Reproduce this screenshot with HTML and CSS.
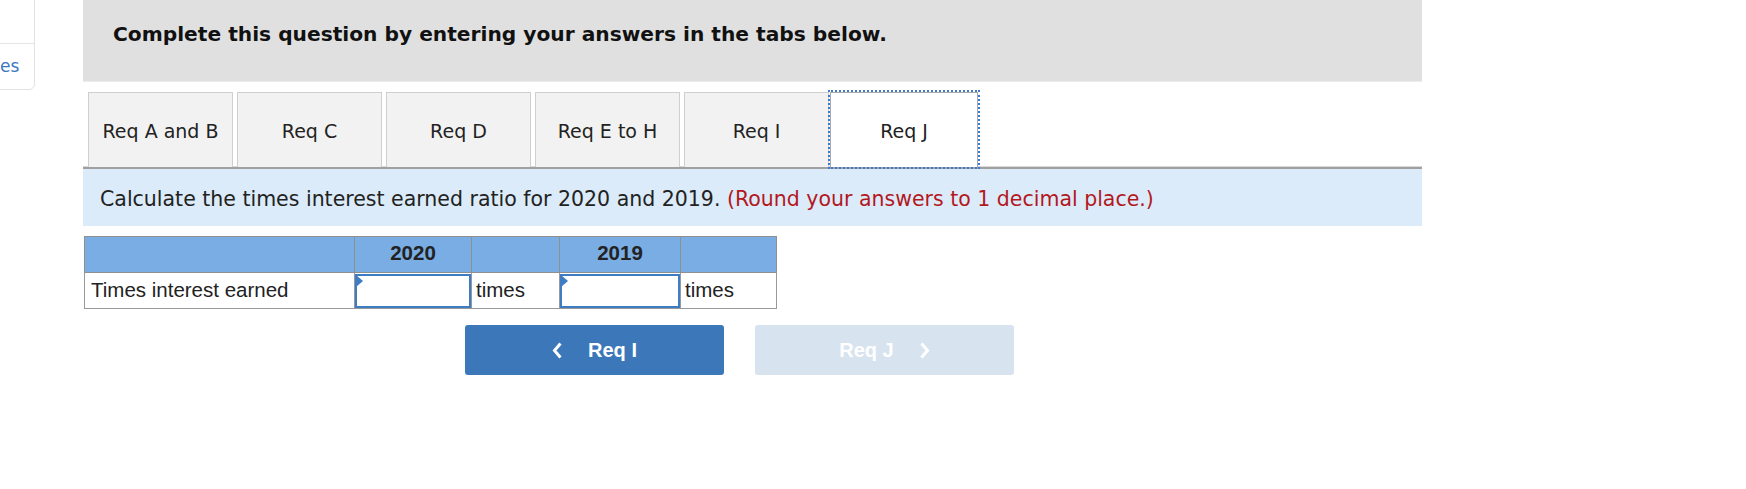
FILE: index.html
```html
<!DOCTYPE html>
<html>
<head>
<meta charset="utf-8">
<link rel="stylesheet" href="styles.css">
</head>
<body>
<div class="page">
  <div class="side-card">
    <div class="side-top"></div>
    <div class="side-bottom"><span class="side-link">es</span></div>
  </div>
  <div class="main">
    <div class="instr">Complete this question by entering your answers in the tabs below.</div>
    <div class="tabs">
      <div class="tab">Req A and B</div>
      <div class="tab">Req C</div>
      <div class="tab">Req D</div>
      <div class="tab">Req E to H</div>
      <div class="tab">Req I</div>
      <div class="tab active">Req J</div>
    </div>
    <div class="prompt">Calculate the times interest earned ratio for 2020 and 2019. <span class="note">(Round your answers to 1 decimal place.)</span></div>
    <table class="grid">
      <tr class="head">
        <th class="c1"></th>
        <th class="c2">2020</th>
        <th class="c3"></th>
        <th class="c4">2019</th>
        <th class="c5"></th>
      </tr>
      <tr>
        <td class="label">Times interest earned</td>
        <td class="inp"><div class="box"><span class="flag"></span></div></td>
        <td class="unit">times</td>
        <td class="inp"><div class="box"><span class="flag"></span></div></td>
        <td class="unit">times</td>
      </tr>
    </table>
    <div class="nav">
      <div class="btn prev"><svg class="chev" width="11" height="17" viewBox="0 0 11 17"><polyline points="8.5,1.5 2.5,8.5 8.5,15.5" fill="none" stroke="#fff" stroke-width="3"/></svg><span>Req I</span></div>
      <div class="btn next"><span>Req J</span><svg class="chev" width="11" height="17" viewBox="0 0 11 17"><polyline points="2.5,1.5 8.5,8.5 2.5,15.5" fill="none" stroke="#fff" stroke-width="3"/></svg></div>
    </div>
  </div>
</div>
</body>
</html>
```
FILE: styles.css
```css
html, body {
  margin: 0;
  padding: 0;
  background: #ffffff;
}
.page {
  position: relative;
  width: 1746px;
  height: 489px;
  overflow: hidden;
}
.side-card {
  position: absolute;
  left: -20px;
  top: -10px;
  width: 53px;
  height: 98px;
  border: 1px solid #e3e3e3;
  border-radius: 0 0 6px 0;
  background: #fff;
}
.side-top {
  height: 52px;
  border-bottom: 1px solid #e6e6e6;
}
.side-link {
  display: block;
  padding: 12px 0 0 19px;
  font-family: "DejaVu Sans", Verdana, sans-serif;
  font-size: 17px;
  color: #3b78c0;
}
.main {
  margin-left: 83px;
  width: 1339px;
  font-family: "DejaVu Sans", Verdana, sans-serif;
}
.instr {
  height: 82px;
  box-sizing: border-box;
  background: #e0e0e0;
  border-bottom: 1px solid #ebebeb;
  padding: 22px 0 0 30px;
  font-weight: bold;
  font-size: 20.2px;
  line-height: 24px;
  color: #111;
}
.tabs {
  display: flex;
  gap: 4px;
  margin-top: 10px;
  padding-left: 5px;
  border-bottom: 2px solid #a0a0a0;
  box-shadow: 0 -1px 0 #d8d8d8 inset;
}
.tab {
  width: 145px;
  height: 75px;
  box-sizing: border-box;
  background: #f2f2f2;
  border: 1px solid #cfcfcf;
  border-bottom: none;
  display: flex;
  align-items: center;
  justify-content: center;
  font-size: 19px;
  color: #222;
  padding-top: 2px;
}
.tab.active {
  background: #fff;
  border: 1px solid #a9a9a9;
  border-bottom: none;
  outline: 2px dotted #3f7bc8;
  outline-offset: 0;
  margin-left: -3px;
  width: 148px;
}
.prompt {
  height: 57px;
  box-sizing: border-box;
  background: #dbebf9;
  padding: 17px 0 0 17px;
  font-size: 20.5px;
  line-height: 26px;
  color: #222;
}
.note {
  color: #b3181e;
}
.grid {
  margin-top: 10px;
  margin-left: 1px;
  border-collapse: collapse;
  font-family: "Liberation Sans", Arial, sans-serif;
  font-size: 20.5px;
  color: #222;
}
.grid th, .grid td {
  border: 1px solid #999;
  padding: 0 0 2px 0;
  height: 33px;
}
.grid th {
  background: #79ade4;
  font-weight: bold;
  color: #222;
  text-align: center;
  border-color: #8f8f8f;
  padding-bottom: 4px;
  height: 31px;
}
.c1 { width: 269px; }
.c2 { width: 116px; }
.c3 { width: 87px; }
.c4 { width: 120px; }
.c5 { width: 95px; }
.label {
  padding-left: 6px !important;
  text-align: left;
}
.unit {
  padding-left: 4px !important;
}
.grid td.inp {
  padding: 0;
  height: 35px;
  vertical-align: middle;
}
.box {
  position: relative;
  height: 34px;
  border: 2px solid #3e7cc3;
  box-sizing: border-box;
  margin: 0;
  background: #fff;
}
.flag {
  position: absolute;
  left: -1px;
  top: -1px;
  width: 0;
  height: 0;
  border-top: 6px solid transparent;
  border-bottom: 6px solid transparent;
  border-left: 7px solid #3e7cc3;
}
.nav {
  display: flex;
  gap: 31px;
  margin-top: 16px;
  margin-left: 382px;
  font-family: "Liberation Sans", Arial, sans-serif;
}
.btn {
  width: 259px;
  height: 50px;
  border-radius: 3px;
  display: flex;
  align-items: center;
  justify-content: center;
  gap: 25px;
  color: #fff;
  font-weight: bold;
  font-size: 20px;
}
.btn.prev {
  background: #3b77b9;
}
.btn.next {
  background: #d8e3f0;
}
.chev {
  display: block;
  flex: none;
}
```
